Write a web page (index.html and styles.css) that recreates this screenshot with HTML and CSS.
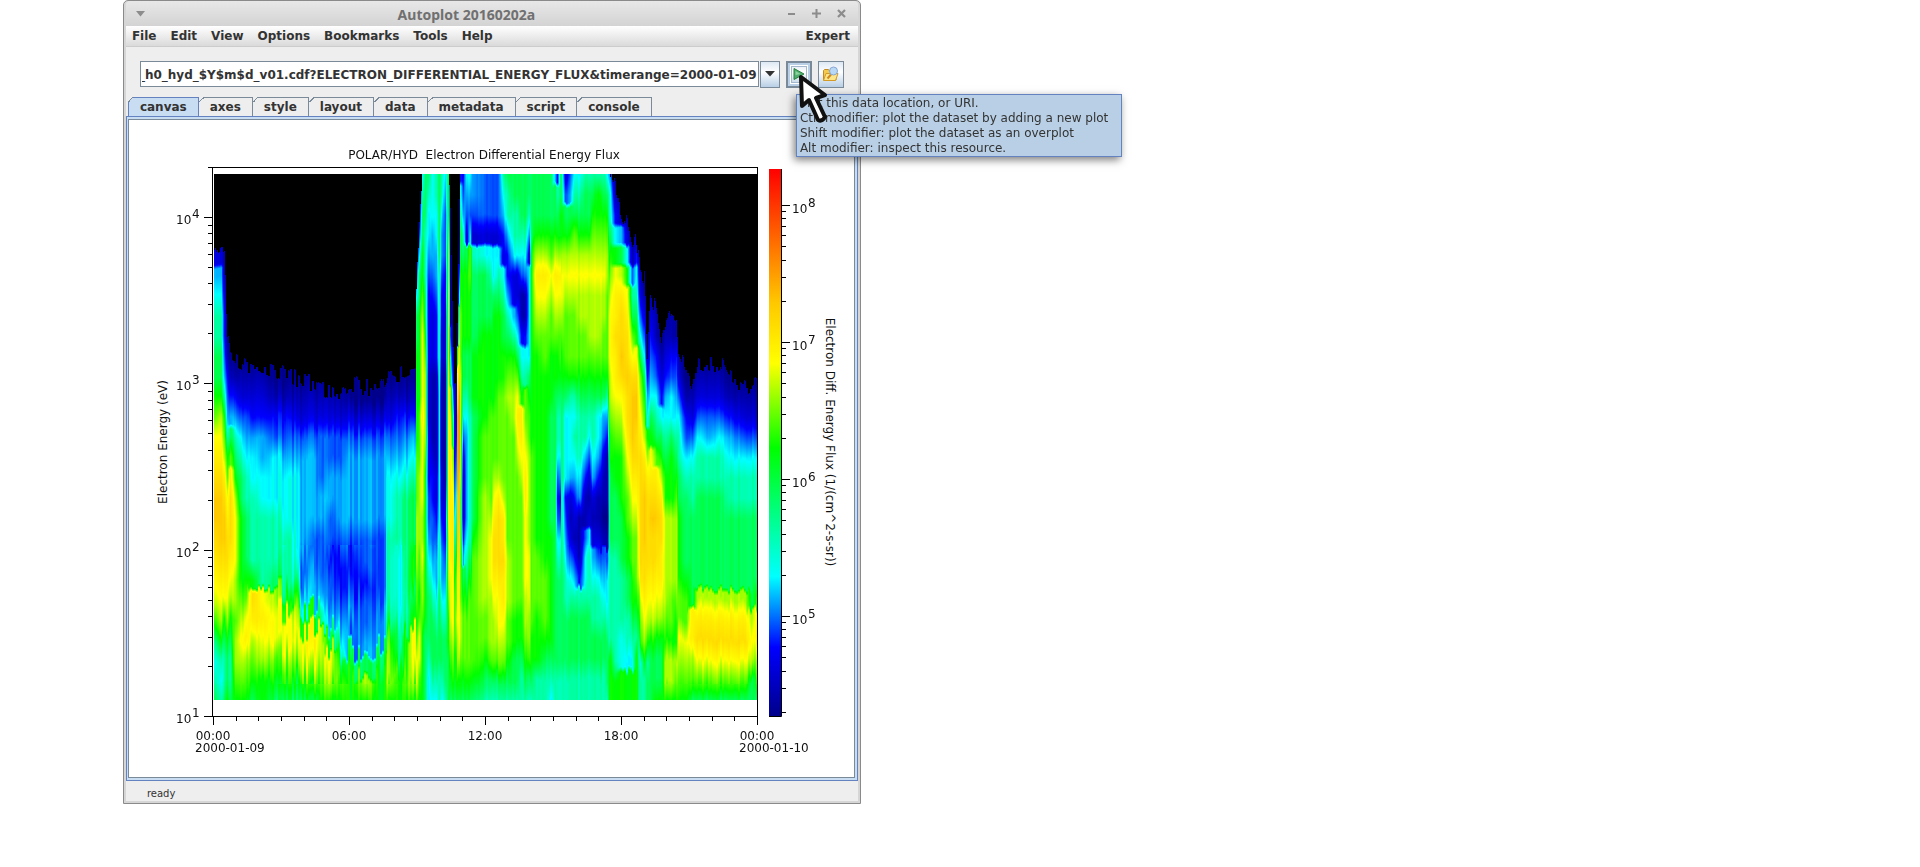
FILE: index.html
```html
<!DOCTYPE html>
<html lang="en">
<head>
<meta charset="UTF-8">
<meta name="viewport" content="width=device-width, initial-scale=1.0">
<title>Autoplot 20160202a</title>
<link rel="stylesheet" href="styles.css">
</head>
<body>

<div class="window">
  <header class="titleBar">
    <button class="winBtn" aria-label="Window menu"><svg width="10" height="6"><path d="M0 0h9L4.500 5.500z" fill="#8c8c8c"/></svg></button>
    <h1>Autoplot 20160202a</h1>
    <div class="winBtns">
      <button class="winBtn" aria-label="Minimize"><svg width="9" height="9"><path d="M1 5h7" stroke="#8c8c8c" stroke-width="2"/></svg></button>
      <button class="winBtn" aria-label="Maximize"><svg width="9" height="9"><path d="M0 4.500h9M4.500 0v9" stroke="#8c8c8c" stroke-width="2"/></svg></button>
      <button class="winBtn" aria-label="Close"><svg width="9" height="9"><path d="M1 1l7 7M8 1L1 8" stroke="#8c8c8c" stroke-width="2.200"/></svg></button>
    </div>
  </header>

  <nav class="menuBar">
    <button>File</button>
    <button>Edit</button>
    <button>View</button>
    <button>Options</button>
    <button>Bookmarks</button>
    <button>Tools</button>
    <button>Help</button>
    <button class="expert">Expert</button>
  </nav>

  <div class="toolBar">
    <input type="text" id="address" class="address" aria-label="Data location" value="_h0_hyd_$Y$m$d_v01.cdf?ELECTRON_DIFFERENTIAL_ENERGY_FLUX&amp;timerange=2000-01-09">
    <button class="toolBtn dropBtn" aria-label="Recent locations"><svg width="10" height="6"><path d="M0 0h10L5 5.500z" fill="#333"/></svg></button>
    <div class="goBox">
      <button class="toolBtn goBtn" aria-label="Plot"><svg width="12" height="14"><path d="M1 1.500l10 5.500L1 12.500z" fill="#4fae6e" stroke="#27803f"/><path d="M2.500 4l5 3-5 1z" fill="#8ed2a1"/></svg></button>
      <div class="tooltip">Plot this data location, or URI.<br>Ctrl modifier: plot the dataset by adding a new plot<br>Shift modifier: plot the dataset as an overplot<br>Alt modifier: inspect this resource.</div>
      <svg class="pointer" width="32" height="50"><path d="M3 3l1 29 7-6 9 20q4 2 7-3l-9-19 9-3z" fill="#fff" stroke="#111" stroke-width="4" stroke-linejoin="round"/></svg>
    </div>
    <button class="toolBtn openBtn" aria-label="Open"><svg width="18" height="16">
      <path d="M1.500 14V4.500l1-1h4l1.500 2h6V14z" fill="#f3c94e" stroke="#c58a1d"/>
      <path d="M1.500 14.500L4 7.500h12l-2.500 7z" fill="#fde68a" stroke="#d39a25"/>
      <path d="M9 8.500l-3.500 4" stroke="#d08a20" stroke-width="2"/>
      <circle cx="11.500" cy="5" r="4" fill="#b9d8f6" stroke="#86a6d2"/>
    </svg></button>
  </div>

  <div class="tabs" role="tablist">
    <button class="active" role="tab">canvas</button>
    <button role="tab">axes</button>
    <button role="tab">style</button>
    <button role="tab">layout</button>
    <button role="tab">data</button>
    <button role="tab">metadata</button>
    <button role="tab">script</button>
    <button role="tab">console</button>
  </div>

  <main class="panel">
    <div class="page">
      <svg class="chart" viewBox="0 0 724 657" width="724" height="657">
        <defs>
          <linearGradient id="scale" x1="0" y1="1" x2="0" y2="0">
            <stop offset="0" stop-color="#00008a"/>
            <stop offset="0.125" stop-color="#0000ff"/>
            <stop offset="0.255" stop-color="#00ffff"/>
            <stop offset="0.490" stop-color="#00ff00"/>
            <stop offset="0.645" stop-color="#ffff00"/>
            <stop offset="0.755" stop-color="#ffc800"/>
            <stop offset="1" stop-color="#ff0000"/>
          </linearGradient>
        </defs>
        <g id="plot" transform="translate(83 47)">
          <foreignObject x="2" y="7" width="543" height="526">
            <canvas id="spectrogram" width="543" height="526"></canvas>
          </foreignObject>
          <rect class="axis" x="0.500" y="0.500" width="545" height="549"/>
          <text class="middle" x="272" y="-8" xml:space="preserve">POLAR/HYD  Electron Differential Energy Flux</text>
          <text class="middle" transform="translate(-45 275) rotate(-90)">Electron Energy (eV)</text>
        </g>
        <g id="colorbar" transform="translate(640 49)">
          <rect width="12" height="547" fill="url(#scale)"/>
          <path class="axis" d="M12.500 0v547.500H0"/>
          <text class="middle" transform="translate(57 273) rotate(90)">Electron Diff. Energy Flux (1/(cm^2-s-sr))</text>
        </g>
      </svg>
    </div>
  </main>

  <footer class="statusBar">ready</footer>
</div>

<script src="script.js"></script>
</body>
</html>
```
FILE: styles.css
```css
body {
  margin: 0;
  background-color: #fff;
  color: #333;
  font-family: "DejaVu Sans", sans-serif;
  font-size: 12px;
}
button {
  font: inherit;
  color: inherit;
  border: none;
  padding: 0;
  background: none;
}
.window {
  box-sizing: border-box;
  width: 38.4%;
  min-width: 738px;
  margin-left: 6.4%;
  border: 1px solid #8a8a8a;
  border-radius: 5px 5px 0 0;
  background-color: #eee;
  box-shadow: inset 0 0 0 2px #d6d6d6;
  padding: 0 2px 2px;
}
.titleBar {
  display: flex;
  align-items: center;
  height: 25px;
  padding: 0 12px 0 10px;
  background: linear-gradient(#e8e8e8, #d3d3d3);
  border-radius: 4px 4px 0 0;
}
.titleBar h1 {
  flex: 1;
  margin: 0;
  padding-top: 1px;
  text-align: center;
  font: bold 14px "Noto Sans", sans-serif;
  color: #707070;
}
.winBtns {
  display: flex;
  gap: 16px;
}
.winBtn {
  display: flex;
}
.menuBar {
  display: flex;
  height: 20px;
  background: linear-gradient(#fff, #dadada);
  border-bottom: 1px solid #ccc;
  font-weight: bold;
}
.menuBar button {
  padding: 0 8px 0 6px;
}
.menuBar .expert {
  margin-left: auto;
}
.toolBar {
  display: flex;
  align-items: center;
  height: 26px;
  padding: 14px 14px 10px;
}
.address {
  flex: 1;
  box-sizing: border-box;
  min-width: 0;
  height: 26px;
  padding: 2px 1px 0;
  border: 1px solid #7a8a99;
  background-color: #fff;
  color: #333;
  font: bold 12px "DejaVu Sans", sans-serif;
}
.toolBtn {
  display: flex;
  align-items: center;
  justify-content: center;
  box-sizing: border-box;
  height: 27px;
  border: 1px solid #7a8a99;
  background: linear-gradient(#dde8f3, #fff 40%, #b8cfe5);
}
.dropBtn {
  width: 20px;
  margin-left: 1px;
}
.goBox {
  position: relative;
  margin: 0 6px;
}
.goBtn {
  width: 26px;
  border: 2px solid #7a8a99;
  box-shadow: inset 0 0 0 2px #b8cfe5, inset 0 0 0 3px #fff, inset 0 0 0 4px #a3b8cc;
}
.openBtn {
  width: 26px;
}
.tooltip {
  position: absolute;
  left: 10px;
  top: 33px;
  z-index: 1;
  min-width: 318px;
  padding: 1px 3px 0;
  border: 1px solid #6382bf;
  background-color: #b8cfe5;
  box-shadow: -2px 3px 8px rgba(0, 0, 0, 0.5);
  line-height: 15px;
  white-space: nowrap;
}
.pointer {
  position: absolute;
  left: 12px;
  top: 13px;
  z-index: 2;
}
.tabs {
  display: flex;
  height: 19px;
  padding-left: 2px;
  font-weight: bold;
}
.tabs button {
  position: relative;
  padding: 0 11px;
  border-top: 1px solid #7a8a99;
  border-right: 1px solid #7a8a99;
}
/* cut corner */
.tabs button::before {
  content: "";
  position: absolute;
  left: 0;
  top: -1px;
  width: 5px;
  height: 5px;
  background: linear-gradient(135deg, #eee 45%, #7a8a99 45%, #7a8a99 60%, transparent 60%);
}
.tabs .active {
  border-color: #6382bf;
  border-left: 1px solid #6382bf;
  background-color: #c8ddf2;
}
.tabs .active::before {
  left: -1px;
}
.panel {
  border: 1px solid #6382bf;
  background-color: #c8ddf2;
  padding: 2px 2px 2px 1px;
}
.page {
  border: 1px solid #7a8a99;
  background-color: #fff;
}
.chart {
  display: block;
  max-width: 100%;
  height: auto;
}
.chart text {
  fill: #111;
  font-size: 12px;
}
.chart .middle {
  text-anchor: middle;
}
.chart .axis {
  fill: none;
  stroke: #000;
}
#spectrogram {
  display: block;
}
.statusBar {
  padding: 6px 21px 1px;
  font-size: 10px;
  line-height: 13px;
}
```
FILE: script.js
```javascript
// One entry per time slice: x, top edge of the counts, then 27 flux levels
// from high to low energy (base 36, three steps per colour of the scale)
var slices = [
  [0, 79, "000125677889acdeffedcb97678"],
  [7, 70, "000125677889bcdefffedcb9767"],
  [10, 85, "0001112334579abdeffedc98778"],
  [13, 155, "000000000134579acdeedcb9889"],
  [16, 175, "00000000001358adeeedcb98778"],
  [21, 182, "0000000000135789bcccbbabba9"],
  [26, 188, "000000000012467889999abcba9"],
  [32, 190, "000000000012456778889acdba9"],
  [38, 192, "000000000012356677779edba98"],
  [48, 195, "000000000012355667777cdcb99"],
  [61, 196, "000000000001346667778bcca98"],
  [73, 200, "0000000000013456667779cca98"],
  [84, 205, "0000000000012456666679bcb98"],
  [87, 208, "00000000000124555554469cb98"],
  [100, 208, "00000000000124555544559dca8"],
  [107, 212, "00000000000124445544457bba9"],
  [116, 218, "000000000001244554434458cb9"],
  [125, 220, "0000000000012445554334579a9"],
  [136, 210, "000000000000245555433454899"],
  [151, 212, "0000000000002455554434458b9"],
  [166, 215, "000000000000245555444455899"],
  [171, 206, "000000000000245555444455899"],
  [173, 195, "00000000000124566677778abb9"],
  [186, 200, "000000000001345677766667799"],
  [199, 193, "00000000000135678889989ccb9"],
  [201, 190, "00000000000135678889989ddb9"],
  [202, 120, "00112468899999aaabbbaa9acca"],
  [205, 40, "012468899999aaabbbbaa9acca9"],
  [208, 0, "678899abccccdccccbbcbba9999"],
  [211, 0, "888777889abbbba999999998888"],
  [214, 0, "876654333322233344567888766"],
  [218, 0, "666554322211112334456788876"],
  [222, 0, "776655433311111223455678876"],
  [225, 0, "888887777776666666777888877"],
  [227, 0, "776554332211111223455678876"],
  [231, 0, "654443322211111123345678887"],
  [234, 0, "899abbccccccccccccbbba99888"],
  [236, 30, "00000001468bcdddddddcccba98"],
  [239, 170, "00000000012467abcdddcccba98"],
  [240, 202, "000000000012233456789aaa998"],
  [242, 200, "00000000001223456789aaba998"],
  [243, 150, "0000000009ceggggfffedccbb98"],
  [245, 20, "0000246abdeggggfffeeddccb98"],
  [246, 0, "3678899aaabbbbbbaaaaaabba98"],
  [249, 0, "3457899998876421113589aaa98"],
  [252, 0, "6542899998876555556789aaa98"],
  [256, 0, "6546aa999888777777789aaaa98"],
  [258, 0, "5542788889998888889aaaaaa98"],
  [271, 0, "4442688899999aaabbbbbbaa987"],
  [277, 0, "444267889999aaaaabcccbbba87"],
  [279, 0, "444266899999aaabcdeedcbba87"],
  [284, 0, "44426789999aaaabdeeedccba87"],
  [289, 0, "76532678899aaaaabddeddcba87"],
  [293, 0, "8775335789abaaaaaaabbbaa987"],
  [300, 0, "8877622579abbaaaaaaaaa99887"],
  [303, 0, "8877622468acdcbaaaaaaa99887"],
  [307, 0, "888764113679ddcbaaaaaa99877"],
  [311, 0, "88876411367aabcddccccbba987"],
  [315, 0, "887526666689aabbbbbcccbba87"],
  [317, 0, "88889999999999aaaaaaaaa9987"],
  [322, 0, "8889bdcba9999999999aaa99977"],
  [331, 0, "8889bdcbaa9999999999aaa9877"],
  [337, 0, "8889acbaa999888888999999876"],
  [341, 0, "5889bdcba998888888888888877"],
  [343, 0, "3789bdcba998776434678888877"],
  [346, 0, "8899bdcbaa98776534678888877"],
  [347, 0, "8899bccba998888888888888877"],
  [351, 0, "2489bcbaaa98666634567788877"],
  [356, 0, "4589bcbaaa97666521246788877"],
  [360, 0, "678abcbaaa97676532135788877"],
  [365, 0, "6789bcbbaa98777651113788877"],
  [371, 0, "7889bcbbaa98775311466788877"],
  [375, 0, "7889bcbbba98764212677788877"],
  [378, 0, "789abcbbba98776521256778877"],
  [384, 0, "799abcbbba98665311246778877"],
  [390, 0, "789abcbbaa98542110145678877"],
  [393, 0, "689abbaaaa97531110146678887"],
  [395, 0, "57789abcccbba9988887777799"],
  [401, 14, "01369cddeddcba9988877777799"],
  [407, 36, "00158bdeefecba9998887776699"],
  [413, 52, "000269cdeefeedcbaa998877699"],
  [418, 76, "00001478acefffedcbaa9987699"],
  [422, 66, "000136789ceffeedcbaaa98799"],
  [426, 96, "0000012468abcdeeeeeedba9677"],
  [430, 105, "000000124689abdefffeedcb977"],
  [433, 180, "00000000013569bdeeeedcb9788"],
  [436, 118, "00000012345689cdefeedcb9888"],
  [442, 136, "00000001134678adefeedcb9889"],
  [447, 168, "000000000123689bdeeddcb9889"],
  [451, 155, "00000000123567899bbbbba9bb9"],
  [458, 138, "00000001134668999bbbbaa9bb9"],
  [462, 142, "0000000113456789abbbba99ba9"],
  [464, 176, "000000000124677889999aacba9"],
  [472, 198, "000000000001346788889aacba9"],
  [478, 214, "0000000000012467788888ddba8"],
  [483, 186, "000000000012467788888bdeca8"],
  [495, 192, "000000000012457788888bdeca8"],
  [506, 188, "000000000012467788888bdeca8"],
  [516, 204, "000000000001356778888bdeca8"],
  [531, 212, "000000000001246778888bdeca8"],
  [538, 210, "000000000001246778888 8bcb8"],
  [543, 206, "000000000001246778888addba8"]
];

// Stops of the colour scale
var colors = [
  [0, 0, 138], [0, 0, 255], [0, 255, 255], [0, 255, 0],
  [255, 255, 0], [255, 205, 0], [255, 80, 0], [255, 0, 0]
];

var seed = 7;
function noise() {
  seed = (seed * 16807) % 2147483647;
  return seed / 2147483647 - 0.5;
}

slices = slices.map(function(s) {
  var levels = s[2].replace(/ /g, "").split("").map(function(c) { return parseInt(c, 36) / 3; });
  // the lowest channels repeat the last reading
  while (levels.length < 27) levels.push(levels[levels.length - 1]);
  return { x: s[0], edge: s[1], levels: levels };
});

function levelAt(levels, y) {
  var pos = Math.max(0, Math.min(25.99, y / 526 * 26));
  var i = Math.floor(pos);
  var f = pos - i;
  // big jumps are real channel boundaries, keep them sharp
  if (levels[i + 1] - levels[i] > 0.9) f = Math.max(0, Math.min(1, (f - 0.5) * 4 + 0.5));
  return levels[i] + (levels[i + 1] - levels[i]) * f;
}

function drawSpectrogram() {
  var ctx = document.getElementById("spectrogram").getContext("2d");
  var img = ctx.createImageData(543, 526);
  var k = 0, shift = 0, gain = 0, rough = 0;
  for (var x = 0; x < 543; x++) {
    while (k < slices.length - 2 && slices[k + 1].x <= x) k++;
    var a = slices[k], b = slices[k + 1];
    var t = (x - a.x) / (b.x - a.x);
    if (x % 2 === 0) {
      var wild = x > 60 && x < 205;
      shift = noise() * (wild ? 30 : 8);
      gain = noise() * (wild ? 0.3 : 0.14);
      rough = noise() * 18;
    }
    var edge = a.edge + (b.edge - a.edge) * t;
    if (edge > 3) edge += rough;
    for (var y = 0; y < 526; y++) {
      // stripes get stronger in the low energy channels
      var yy = y + shift * (y > 370 && y < 510 ? 1 : 0.3);
      var v = levelAt(a.levels, yy) * (1 - t) + levelAt(b.levels, yy) * t + gain;
      v = Math.max(0, Math.min(6.99, v));
      var i = Math.floor(v), f = v - i, p = (y * 543 + x) * 4;
      for (var c = 0; c < 3; c++) {
        img.data[p + c] = y < edge ? 0 : colors[i][c] + (colors[i + 1][c] - colors[i][c]) * f;
      }
      img.data[p + 3] = 255;
    }
  }
  ctx.putImageData(img, 0, 0);
}

function add(parent, name, attrs, text) {
  var el = document.createElementNS("http://www.w3.org/2000/svg", name);
  for (var key in attrs) el.setAttribute(key, attrs[key]);
  if (text) el.textContent = text;
  parent.appendChild(el);
  return el;
}

function powerLabel(parent, x, y, power) {
  add(parent, "text", { x: x, y: y }, "10");
  add(parent, "text", { x: x + 16, y: y - 6 }, String(power));
}

function drawAxes() {
  var plot = document.getElementById("plot");
  var bar = document.getElementById("colorbar");
  var d = "", p, m, y;

  for (p = 1; p <= 4; p++) {
    for (m = 1; m < 10; m++) {
      y = Math.round(549 - 166.3 * (p - 1 + Math.log10(m)));
      if (y < 0) break;
      d += "M0 " + (y + 0.5) + "h" + (m === 1 ? -8 : -4);
    }
    powerLabel(plot, -36, Math.round(549 - 166.3 * (p - 1)) + 7, p);
  }

  for (var h = 0; h <= 24; h++) {
    var x = Math.round(1 + h * 22.67);
    d += "M" + (x + 0.5) + " 549v" + (h % 6 === 0 ? 9 : 5);
    if (h % 6 === 0) {
      add(plot, "text", { x: x, y: 573, "class": "middle" }, ("0" + h % 24).slice(-2) + ":00");
    }
  }
  add(plot, "text", { x: -17, y: 585 }, "2000-01-09");
  add(plot, "text", { x: 527, y: 585 }, "2000-01-10");
  add(plot, "path", { d: d, "class": "axis" });

  d = "";
  for (p = 4; p <= 8; p++) {
    for (m = 1; m < 10; m++) {
      y = Math.round(36 + 137 * (8 - p - Math.log10(m)));
      if (y < 0 || y > 547) continue;
      d += "M12 " + (y + 0.5) + "h" + (m === 1 ? 9 : 5);
    }
    if (p > 4) powerLabel(bar, 23, 36 + 137 * (8 - p) + 8, p);
  }
  add(bar, "path", { d: d, "class": "axis" });
}

drawSpectrogram();
drawAxes();

// show the end of the address
var address = document.getElementById("address");
address.scrollLeft = address.scrollWidth;
```
